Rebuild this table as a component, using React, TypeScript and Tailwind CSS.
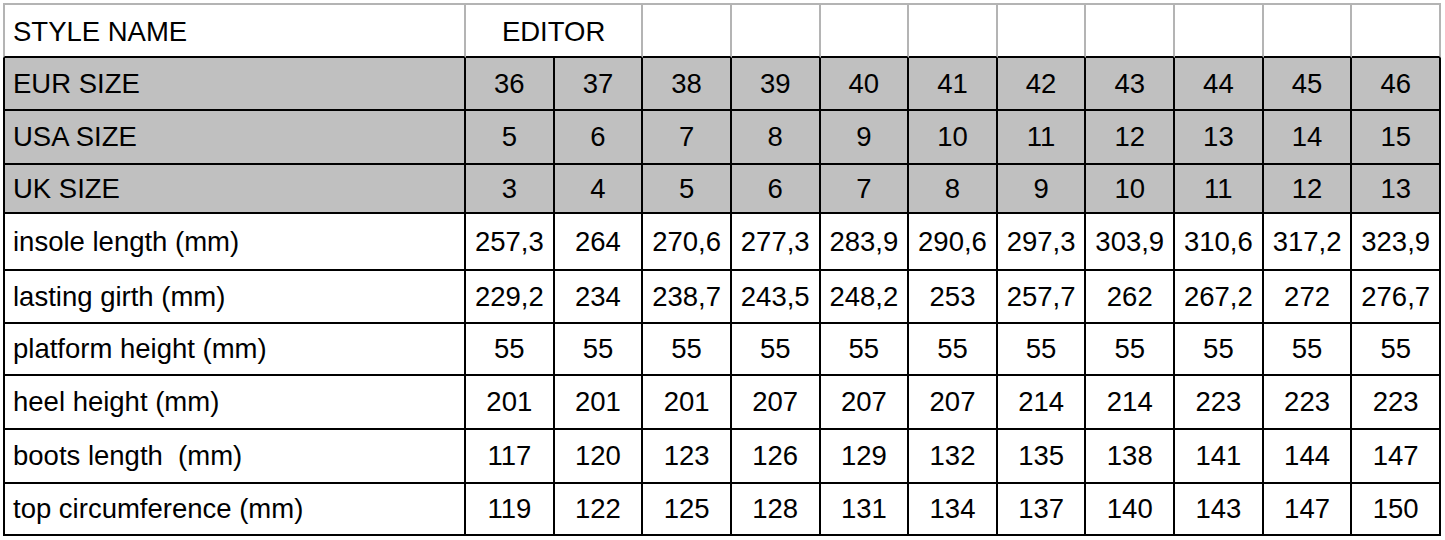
import React from "react";

const headerTail = 9;

const grayRows: [string, string[]][] = [
  ["EUR SIZE", ["36", "37", "38", "39", "40", "41", "42", "43", "44", "45", "46"]],
  ["USA SIZE", ["5", "6", "7", "8", "9", "10", "11", "12", "13", "14", "15"]],
  ["UK SIZE", ["3", "4", "5", "6", "7", "8", "9", "10", "11", "12", "13"]],
];

const whiteRows: [string, string[]][] = [
  ["insole length (mm)", ["257,3", "264", "270,6", "277,3", "283,9", "290,6", "297,3", "303,9", "310,6", "317,2", "323,9"]],
  ["lasting girth (mm)", ["229,2", "234", "238,7", "243,5", "248,2", "253", "257,7", "262", "267,2", "272", "276,7"]],
  ["platform height (mm)", ["55", "55", "55", "55", "55", "55", "55", "55", "55", "55", "55"]],
  ["heel height (mm)", ["201", "201", "201", "207", "207", "207", "214", "214", "223", "223", "223"]],
  ["boots length  (mm)", ["117", "120", "123", "126", "129", "132", "135", "138", "141", "144", "147"]],
  ["top circumference (mm)", ["119", "122", "125", "128", "131", "134", "137", "140", "143", "147", "150"]],
];

const rowHeights = ["h-[53px]", "h-[54px]", "h-[49px]", "h-[57px]", "h-[53px]", "h-[52px]", "h-[54px]", "h-[54px]", "h-[52px]"];

export default function App() {
  const allRows = [...grayRows.map((r) => ({ r, gray: true })), ...whiteRows.map((r) => ({ r, gray: false }))];
  return (
    <div className="w-[1445px] h-[540px] bg-white overflow-hidden pt-[3px] pl-[3px]">
      <div
        className="grid grid-cols-[463px_repeat(11,minmax(0,1fr))] w-[1438px] text-[27.5px] text-black leading-none"
        style={{ fontFamily: '"Liberation Sans", Arial, sans-serif' }}
      >
        <div className="h-[55px] border-t-2 border-l-2 border-r-2 border-b-2 border-t-[#b4b4b4] border-l-[#b4b4b4] border-r-[#b4b4b4] border-b-black flex items-center pl-[8px] pt-[2px]">
          STYLE NAME
        </div>
        <div className="col-span-2 h-[55px] border-t-2 border-r-2 border-b-2 border-t-[#b4b4b4] border-r-[#b4b4b4] border-b-black flex items-center justify-center pt-[2px]">
          EDITOR
        </div>
        {Array.from({ length: headerTail }).map((_, i) => (
          <div
            key={i}
            className="h-[55px] border-t-2 border-r-2 border-b-2 border-t-[#b4b4b4] border-r-[#b4b4b4] border-b-black"
          />
        ))}
        {allRows.map(({ r, gray }, ri) => (
          <React.Fragment key={ri}>
            <div
              className={`${rowHeights[ri]} border-l-2 border-r-2 border-b-2 border-black flex items-center pl-[8px] whitespace-pre ${gray ? "bg-[#c0c0c0]" : "bg-white"}`}
            >
              {r[0]}
            </div>
            {r[1].map((v, ci) => (
              <div
                key={ci}
                className={`${rowHeights[ri]} border-r-2 border-b-2 border-black flex items-center justify-center ${gray ? "bg-[#c0c0c0]" : "bg-white"}`}
              >
                {v}
              </div>
            ))}
          </React.Fragment>
        ))}
      </div>
    </div>
  );
}
